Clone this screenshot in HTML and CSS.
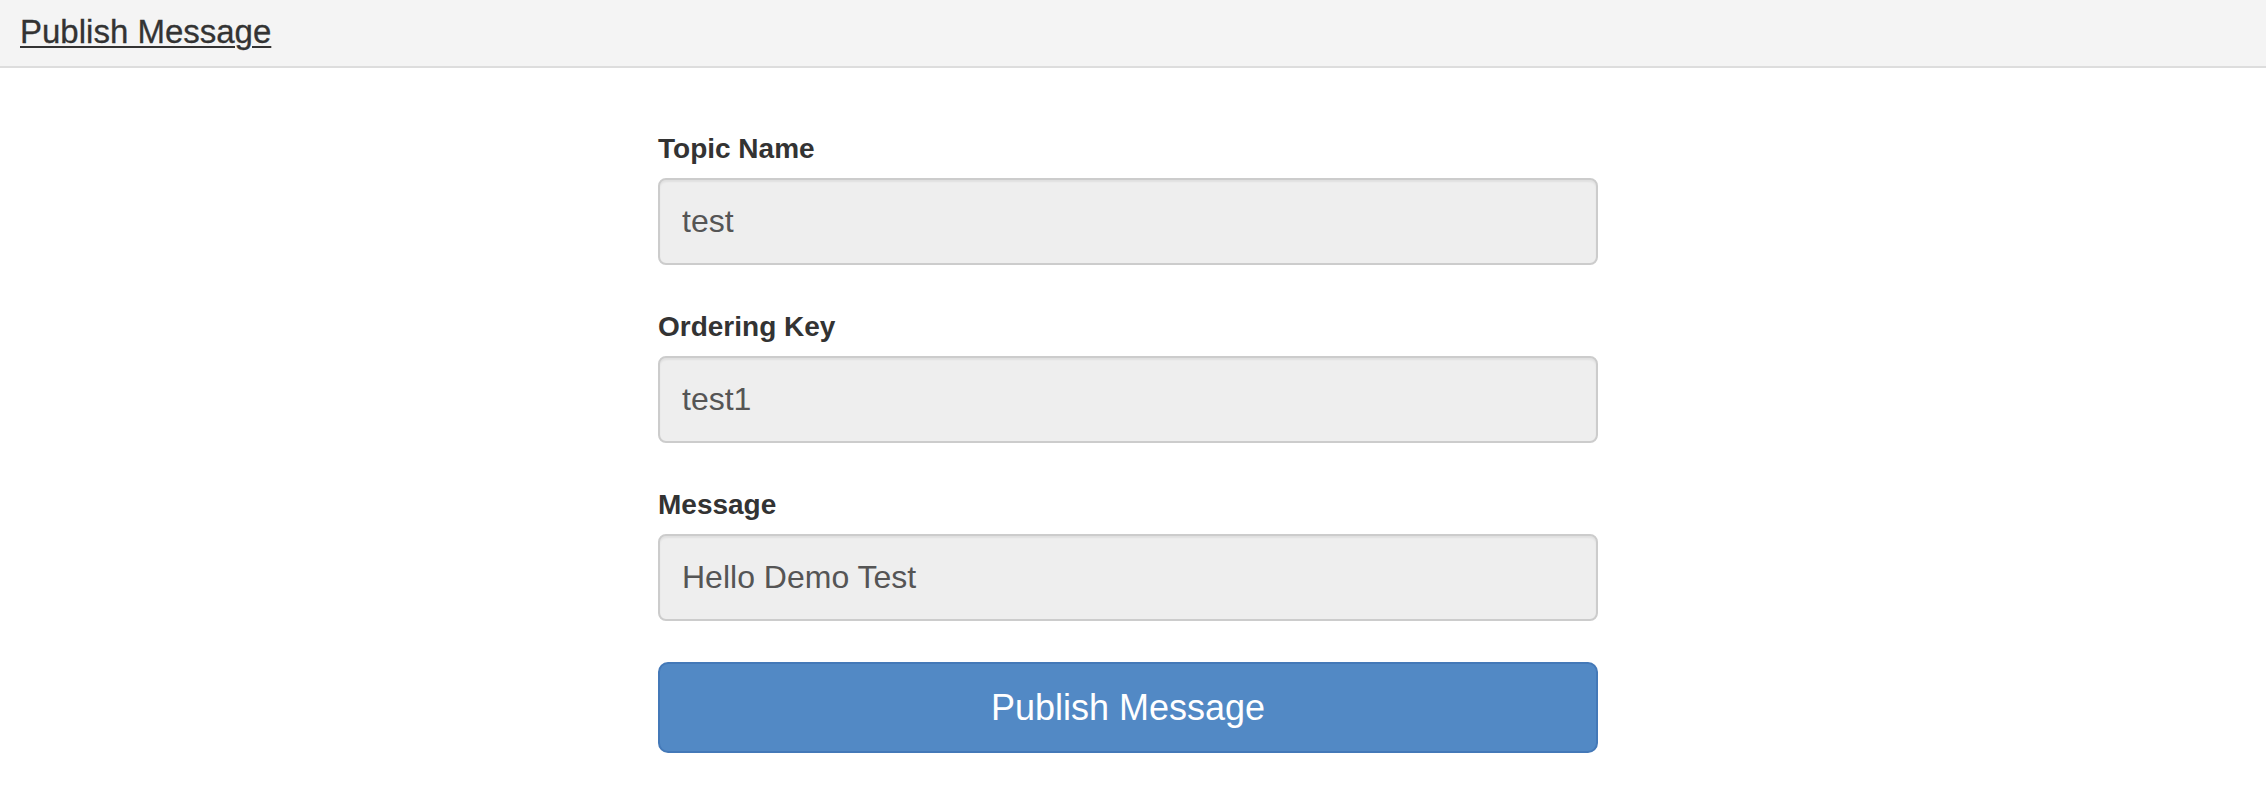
FILE: index.html
```html
<!DOCTYPE html>
<html>
<head>
<meta charset="utf-8">
<title>Publish Message</title>
<link rel="stylesheet" href="styles.css">
</head>
<body>
<header class="topbar">
  <a class="brand" href="#">Publish Message</a>
</header>
<main class="page">
  <form class="form">
    <div class="group">
      <label class="label" for="topic">Topic Name</label>
      <input class="field" id="topic" type="text" value="test">
    </div>
    <div class="group">
      <label class="label" for="key">Ordering Key</label>
      <input class="field" id="key" type="text" value="test1">
    </div>
    <div class="group">
      <label class="label" for="msg">Message</label>
      <input class="field" id="msg" type="text" value="Hello Demo Test">
    </div>
    <button class="btn" type="button">Publish Message</button>
  </form>
</main>
</body>
</html>
```
FILE: styles.css
```css
html, body {
  margin: 0;
  padding: 0;
  background: #fff;
  font-family: "Liberation Sans", Arial, sans-serif;
  color: #333;
}
.topbar {
  height: 68px;
  background: #f4f4f4;
  border-bottom: 2px solid #dddddd;
  display: flex;
  align-items: center;
  padding-left: 20px;
  box-sizing: border-box;
}
.brand {
  font-size: 33px;
  color: #333;
  text-decoration: underline;
  text-underline-offset: 3px;
  text-decoration-thickness: 2px;
  margin-top: -3px;
  -webkit-text-stroke: 0.3px #333;
}
.page {
  padding-top: 65px;
}
.form {
  width: 940px;
  margin-left: calc(50% - 475px);
  display: flex;
  flex-direction: column;
}
.group {
  display: flex;
  flex-direction: column;
  margin-bottom: 46px;
}
.group:last-of-type {
  margin-bottom: 41px;
}
.label {
  font-size: 28px;
  font-weight: bold;
  line-height: 32px;
  color: #333;
  margin-bottom: 13px;
}
.field {
  box-sizing: border-box;
  height: 87px;
  width: 100%;
  border: 2px solid #cccccc;
  border-radius: 8px;
  background: #eeeeee;
  padding: 0 22px;
  font-family: "Liberation Sans", Arial, sans-serif;
  font-size: 32px;
  color: #555;
  box-shadow: inset 0 2px 2px rgba(0,0,0,0.06);
}
.btn {
  box-sizing: border-box;
  height: 91px;
  width: 100%;
  background: #5289c5;
  border: 2px solid #4479b8;
  border-radius: 10px;
  color: #fff;
  font-family: "Liberation Sans", Arial, sans-serif;
  font-size: 36px;
}
```
